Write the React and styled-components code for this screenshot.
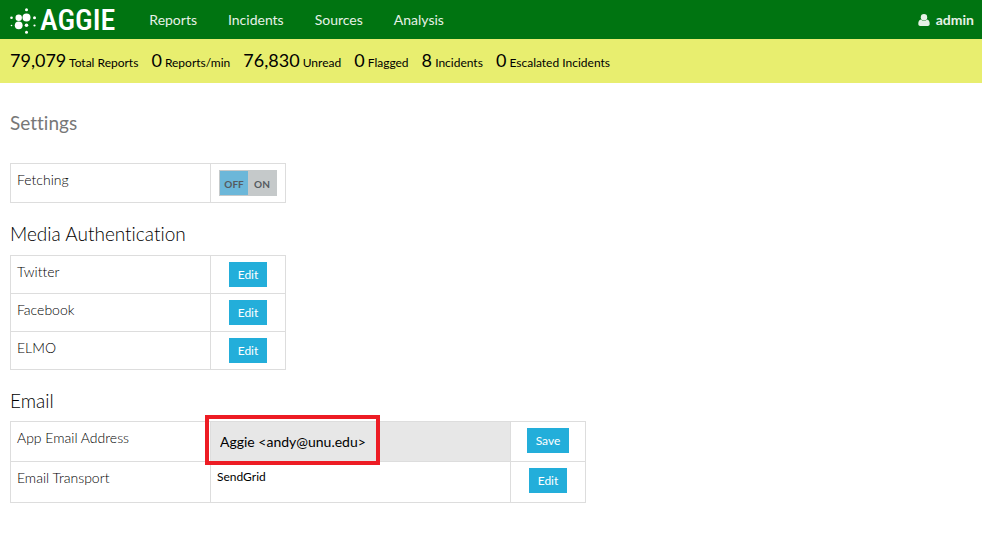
import React from 'react';
import styled, { createGlobalStyle } from 'styled-components';

const Global = createGlobalStyle`
  *, *::before, *::after { box-sizing: border-box; }
  body {
    margin: 0;
    background: #fff;
    color: #000;
    font: 400 14px/20px Lato, "Open Sans", sans-serif;
    font-variant-ligatures: none;
  }
  button, input { font-family: inherit; }
`;

const NavBar = styled.header`
  display: flex;
  align-items: center;
  height: 39px;
  padding: 0 8px 0 10px;
  background: #007411;
`;

const Brand = styled.a`
  display: flex;
  align-items: center;
  gap: 3px;
  color: #fff;
  text-decoration: none;
`;

const BrandName = styled.span`
  font: 500 30px/39px "Roboto Condensed", "Liberation Sans Narrow", sans-serif;
`;

const NavLinks = styled.nav`
  display: flex;
  gap: 31px;
  margin-left: 34px;
  flex: 1;
`;

const NavLink = styled.a`
  color: #e6f1e7;
  text-decoration: none;
  line-height: 20px;
`;

const UserLink = styled(NavLink)`
  display: flex;
  align-items: center;
  gap: 6px;
  font-weight: 700;
`;

const StatsBar = styled.section`
  display: flex;
  flex-wrap: wrap;
  align-items: center;
  gap: 0 13px;
  min-height: 44px;
  padding: 8px 10px;
  background: #e8ee6f;
`;

const Stat = styled.span`
  font-size: 12px;
  line-height: 25px;
`;

const StatValue = styled.span`
  font-size: 18px;
`;

const Main = styled.main`
  padding: 28px 10px 40px;
`;

const PageTitle = styled.h1`
  margin: 0 0 28px;
  color: #777;
  font-size: 19px;
  font-weight: 400;
  line-height: 24px;
`;

const SectionTitle = styled.h2`
  margin: 19px 0 ${p => (p.$tight ? 8 : 9)}px;
  font-size: 19px;
  font-weight: 300;
  line-height: 24px;
`;

const Table = styled.table`
  border-collapse: collapse;
  table-layout: fixed;
  width: ${p => (p.$wide ? 576 : 276)}px;
`;

const Label = styled.th`
  width: 200px;
  padding: 6px;
  border: 1px solid #ddd;
  font-weight: 300;
  text-align: left;
  vertical-align: top;
`;

const Value = styled.td`
  width: 300px;
  padding: ${p => (p.$editing ? 0 : '5px 6px')};
  border: 1px solid #ddd;
  background: ${p => (p.$editing ? '#e7e7e7' : '#fff')};
  font-size: 12px;
  vertical-align: top;
`;

const Action = styled.td`
  width: 75px;
  height: ${p => p.$height || 38}px;
  padding: 6px 0;
  border: 1px solid #ddd;
  text-align: center;
  vertical-align: top;
`;

const Button = styled.button`
  display: inline-block;
  height: 25px;
  padding: 0 9px;
  border: 0;
  background: #23aeda;
  color: #fff;
  font-size: 12px;
  line-height: 25px;
  vertical-align: top;
  cursor: pointer;
`;

const Toggle = styled.button`
  display: inline-flex;
  width: 58px;
  height: 26px;
  padding: 1px;
  border: 0;
  background: #c5c9ca;
  color: #555b60;
  font-size: 10px;
  font-weight: 700;
  line-height: 26px;
  vertical-align: top;
  cursor: pointer;
`;

const ToggleSide = styled.span`
  flex: 1;
  height: 24px;
  background: ${p => (p.$active ? '#6cb7d9' : 'transparent')};
`;

const EmailField = styled.div`
  position: relative;
  height: 39px;
`;

const EmailInput = styled.input`
  display: block;
  width: 100%;
  height: 39px;
  padding: 0 9px;
  border: 0;
  background: transparent;
  color: #000;
  font-size: 14px;
`;

const Highlight = styled.span`
  position: absolute;
  top: -7px;
  left: -6px;
  width: 175px;
  height: 50px;
  border: 4px solid #ed1c24;
  pointer-events: none;
`;

const BrandMark = () => (
  <svg width="27" height="29" viewBox="0 0 27 29" fill="#fff" aria-hidden="true">
    <circle cx="16.5" cy="12.5" r="4" />
    <circle cx="8.7" cy="12.8" r="3.2" />
    <circle cx="8.7" cy="20.3" r="3.9" />
    <circle cx="16.5" cy="20.3" r="1.8" />
    <circle cx="16.5" cy="4.7" r="1.5" />
    <circle cx="1.5" cy="12.7" r="1.3" />
    <circle cx="1.5" cy="20.5" r=".8" />
    <circle cx="24.5" cy="12.7" r="1.5" />
    <circle cx="24.5" cy="20.5" r="1.1" />
    <circle cx="16.5" cy="27.3" r="1.5" />
  </svg>
);

const UserIcon = () => (
  <svg width="12" height="12" viewBox="0 0 12 12" fill="#e6f1e7" aria-hidden="true">
    <circle cx="6" cy="3.2" r="3.2" />
    <path d="M3 5.5C1 5.8.3 7.5.3 10c0 1.3.8 2 1.9 2h7.6c1.1 0 1.9-.7 1.9-2C11.7 7.5 11 5.8 9 5.5 7.5 7.2 4.5 7.2 3 5.5Z" />
  </svg>
);

const stats = [
  ['79,079', 'Total Reports'],
  ['0', 'Reports/min'],
  ['76,830', 'Unread'],
  ['0', 'Flagged'],
  ['8', 'Incidents'],
  ['0', 'Escalated Incidents'],
];

export default function App() {
  return (
    <>
      <Global />
      <NavBar>
        <Brand href="#home">
          <BrandMark />
          <BrandName>AGGIE</BrandName>
        </Brand>
        <NavLinks>
          {['Reports', 'Incidents', 'Sources', 'Analysis'].map(name => (
            <NavLink key={name} href={`#${name.toLowerCase()}`}>{name}</NavLink>
          ))}
        </NavLinks>
        <UserLink href="#profile"><UserIcon />admin</UserLink>
      </NavBar>
      <StatsBar>
        {stats.map(([value, label]) => (
          <Stat key={label}><StatValue>{value}</StatValue> {label}</Stat>
        ))}
      </StatsBar>
      <Main>
        <PageTitle>Settings</PageTitle>
        <Table>
          <tbody>
            <tr>
              <Label scope="row" id="fetching">Fetching</Label>
              <Action $height={39}>
                <Toggle type="button" role="switch" aria-checked="false" aria-labelledby="fetching">
                  <ToggleSide $active>OFF</ToggleSide>
                  <ToggleSide>ON</ToggleSide>
                </Toggle>
              </Action>
            </tr>
          </tbody>
        </Table>
        <SectionTitle>Media Authentication</SectionTitle>
        <Table>
          <tbody>
            {['Twitter', 'Facebook', 'ELMO'].map(name => (
              <tr key={name}>
                <Label scope="row">{name}</Label>
                <Action><Button type="button">Edit</Button></Action>
              </tr>
            ))}
          </tbody>
        </Table>
        <SectionTitle $tight>Email</SectionTitle>
        <Table $wide>
          <tbody>
            <tr>
              <Label scope="row"><label htmlFor="app-email">App Email Address</label></Label>
              <Value $editing>
                <EmailField>
                  <EmailInput id="app-email" type="text" defaultValue="Aggie <andy@unu.edu>" />
                  <Highlight />
                </EmailField>
              </Value>
              <Action $height={40}><Button type="button">Save</Button></Action>
            </tr>
            <tr>
              <Label scope="row">Email Transport</Label>
              <Value>SendGrid</Value>
              <Action $height={41}><Button type="button">Edit</Button></Action>
            </tr>
          </tbody>
        </Table>
      </Main>
    </>
  );
}
